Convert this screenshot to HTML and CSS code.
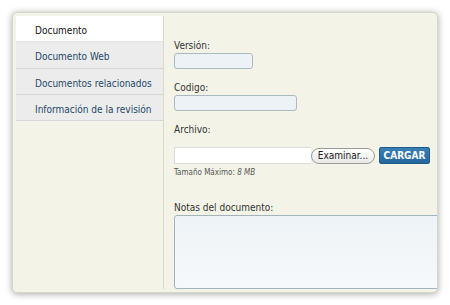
FILE: index.html
```html
<!DOCTYPE html>
<html lang="es">
<head>
  <meta charset="UTF-8" />
  <title>Documento</title>
  <link rel="stylesheet" href="styles.css">
</head>
<body>
  <div class="frame">
    <div class="sidebar">
      <div class="tab active">Documento</div>
      <div class="tab">Documento Web</div>
      <div class="tab">Documentos relacionados</div>
      <div class="tab">Información de la revisión</div>
    </div>

    <div class="content">
      <label class="field-label">Versión:</label>
      <input class="text-input short" type="text">

      <label class="field-label">Codigo:</label>
      <input class="text-input medium" type="text">

      <label class="field-label">Archivo:</label>
      <div class="file-row">
        <div class="file-box"></div>
        <button class="browse-btn">Examinar...</button>
        <button class="upload-btn">CARGAR</button>
      </div>
      <div class="hint">Tamaño Máximo: <em>8 MB</em></div>

      <label class="field-label notes-label">Notas del documento:</label>
      <textarea class="notes"></textarea>
    </div>
  </div>
</body>
</html>
```

FILE: styles.css
```css
* { margin: 0; padding: 0; box-sizing: border-box; }
body {
  background: #ffffff;
  font-family: 'DejaVu Sans Condensed', 'DejaVu Sans', sans-serif;
  font-size: 10px;
  color: #333;
}
.frame {
  margin: 12px;
  width: 426px;
  height: 281px;
  padding: 3px 0 3px 3px;
  background: #f3f4e7;
  border: 1px solid #d6d7cc;
  border-radius: 5px;
  box-shadow: 0 1px 7px rgba(0,0,0,0.35);
  display: flex;
  overflow: hidden;
}
.sidebar {
  width: 148px;
  flex-shrink: 0;
  border-right: 1px solid #d9dacf;
}
.tab {
  height: 26px;
  padding-top: 3px;
  line-height: 23px;
  padding-left: 19px;
  background: #ececec;
  color: #244769;
  border-bottom: 1px solid #d6d6d6;
  white-space: nowrap;
}
.tab:nth-child(2) { height: 27px; }
.tab.active {
  background: #ffffff;
  color: #111;
  border-bottom-color: #e2e2e2;
}
.content {
  flex-grow: 1;
  padding: 24px 0 0 10px;
  display: flex;
  flex-direction: column;
  align-items: flex-start;
  min-width: 0;
}
.field-label {
  display: block;
  line-height: 12px;
  color: #333;
  margin-bottom: 1px;
}
.text-input {
  height: 16px;
  background: #edf2f6;
  border: 1px solid #a9bac3;
  border-radius: 3px;
  margin-bottom: 13px;
}
.text-input.short { width: 79px; }
.text-input.medium { width: 123px; }
.file-row {
  display: flex;
  align-items: center;
  margin-top: 10px;
}
.file-box {
  width: 137px;
  height: 17px;
  background: #ffffff;
  border: 1px solid #dcdcdc;
  border-right: none;
}
.browse-btn {
  width: 64px;
  height: 16px;
  font-family: inherit;
  font-size: 10px;
  color: #222;
  background: linear-gradient(#ffffff, #e8e8e8);
  border: 1px solid #9a9a9a;
  border-radius: 8px;
}
.upload-btn {
  margin-left: 4px;
  width: 51px;
  height: 17px;
  font-family: inherit;
  font-size: 10px;
  font-weight: bold;
  color: #ffffff;
  background: linear-gradient(#3a7fb5, #23679e);
  border: 1px solid #1e5a8a;
  border-radius: 2px;
}
.hint {
  margin-top: 4px;
  font-size: 8px;
  line-height: 10px;
  color: #555;
}
.hint em { font-style: italic; }
.notes-label { margin-top: 24px; }
.notes {
  width: 280px;
  height: 74px;
  background: linear-gradient(#eef3f7, #f6f9fb);
  border: 1px solid #a4b4bc;
  border-radius: 3px;
  resize: none;
}
```
